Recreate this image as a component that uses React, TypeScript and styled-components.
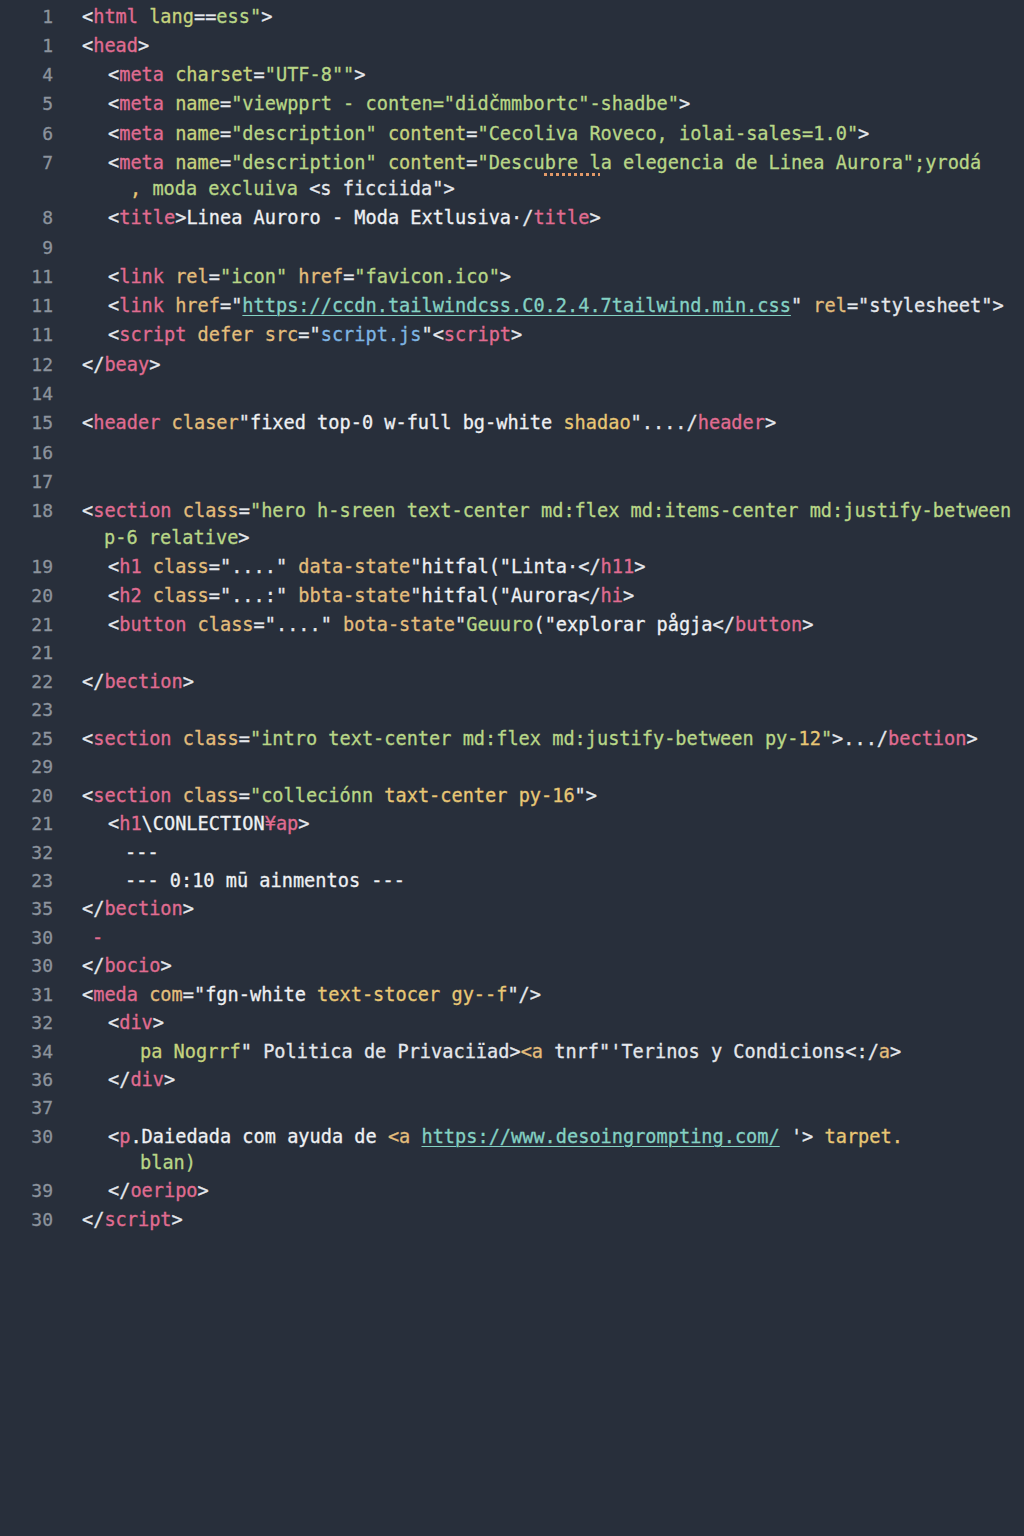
import React from "react";
import styled, { createGlobalStyle } from "styled-components";

const Global = createGlobalStyle`
  html, body {
    margin: 0;
    padding: 0;
    background: #282f3b;
  }
  body {
    font-family: "DejaVu Sans Mono", "Liberation Mono", monospace;
  }
`;

type Kind = "p" | "t" | "a" | "m" | "s" | "w" | "b" | "u" | "y" | "sq";

const colors: Record<Kind, string> = {
  p: "#e4e7ec",
  t: "#e06c91",
  a: "#e3bd7b",
  m: "#c6d37e",
  s: "#b8d687",
  w: "#eef0f3",
  b: "#7fb5e2",
  u: "#84d1c3",
  y: "#e8c775",
  sq: "#b8d687",
};

const Editor = styled.main`
  min-height: 1536px;
  box-sizing: border-box;
  background: #282f3b;
  padding: 1.5px 0 0;
  display: flex;
  flex-direction: column;
  font-size: 18.6px;
  -webkit-text-stroke: 0.3px currentColor;
`;

const Block = styled.div<{ $h: number }>`
  display: flex;
  flex-direction: column;
  --row-h: ${(p) => p.$h}px;
`;

const Row = styled.div<{ $wrap?: boolean }>`
  display: grid;
  grid-template-columns: 53px 1fr;
  column-gap: 29px;
  box-sizing: border-box;
  height: ${(p) => (p.$wrap ? "26px" : "var(--row-h)")};
  line-height: ${(p) => (p.$wrap ? "23px" : "var(--row-h)")};
  padding-bottom: ${(p) => (p.$wrap ? "3px" : "0")};
  white-space: pre;
`;

const LineNo = styled.span`
  text-align: right;
  color: #8c939d;
  font-size: 18px;
`;

const Code = styled.span<{ $indent: number }>`
  padding-left: ${(p) => p.$indent}px;
`;

const Tok = styled.span<{ $k: Kind }>`
  color: ${(p) => colors[p.$k]};
  ${(p) =>
    p.$k === "u"
      ? `text-decoration: underline; text-decoration-thickness: 1px; text-underline-offset: 3px;`
      : ""}
  ${(p) =>
    p.$k === "sq"
      ? `text-decoration: underline dotted #e39a68; text-decoration-thickness: 3px; text-underline-offset: 4px;`
      : ""}
`;

type T = [Kind, string];
type Line = { n?: string; i?: number; wrap?: boolean; toks?: T[] };

const top: Line[] = [
  { n: "1", i: 0, toks: [["p", "<"], ["t", "html"], ["m", " lang"], ["p", "=="], ["s", "ess\""], ["p", ">"]] },
  { n: "1", i: 0, toks: [["p", "<"], ["t", "head"], ["p", ">"]] },
  { n: "4", i: 26, toks: [["p", "<"], ["t", "meta"], ["m", " charset"], ["p", "="], ["s", "\"UTF-8\"\""], ["p", ">"]] },
  { n: "5", i: 26, toks: [["p", "<"], ["t", "meta"], ["m", " name"], ["p", "="], ["s", "\"viewpprt - conten=\"didčmmbortc\"-shadbe\""], ["p", ">"]] },
  { n: "6", i: 26, toks: [["p", "<"], ["t", "meta"], ["m", " name"], ["p", "="], ["s", "\"description\""], ["m", " content"], ["p", "="], ["s", "\"Cecoliva Roveco, iolai-sales=1.0\""], ["p", ">"]] },
  { n: "7", i: 26, toks: [["p", "<"], ["t", "meta"], ["m", " name"], ["p", "="], ["s", "\"description\""], ["m", " content"], ["p", "="], ["s", "\"Descu"], ["sq", "bre l"], ["s", "a elegencia de Linea Aurora\";yrodá"]] },
  { wrap: true, i: 48, toks: [["y", ","], ["s", " moda excluiva "], ["p", "<s ficciida\">"]] },
  { n: "8", i: 26, toks: [["p", "<"], ["t", "title"], ["p", ">"], ["w", "Linea Auroro - Moda Extlusiva"], ["p", "·/"], ["t", "title"], ["p", ">"]] },
  { n: "9" },
  { n: "11", i: 26, toks: [["p", "<"], ["t", "link"], ["a", " rel"], ["p", "="], ["s", "\"icon\""], ["a", " href"], ["p", "="], ["s", "\"favicon.ico\""], ["p", ">"]] },
  { n: "11", i: 26, toks: [["p", "<"], ["t", "link"], ["a", " href"], ["p", "=\""], ["u", "https://ccdn.tailwindcss.C0.2.4.7tailwind.min.css"], ["p", "\""], ["a", " rel"], ["p", "=\"stylesheet\">"]] },
  { n: "11", i: 26, toks: [["p", "<"], ["t", "script"], ["a", " defer src"], ["p", "=\""], ["b", "script.js"], ["p", "\"<"], ["t", "script"], ["p", ">"]] },
  { n: "12", i: 0, toks: [["p", "</"], ["t", "beay"], ["p", ">"]] },
  { n: "14" },
  { n: "15", i: 0, toks: [["p", "<"], ["t", "header"], ["a", " claser"], ["p", "\""], ["w", "fixed top-0 w-full bg-white "], ["y", "shadao"], ["p", "\"..../"], ["t", "header"], ["p", ">"]] },
  { n: "16" },
  { n: "17" },
  { n: "18", i: 0, toks: [["p", "<"], ["t", "section"], ["a", " class"], ["p", "="], ["s", "\"hero h-sreen text-center md:flex md:items-center md:justify-between"]] },
  { wrap: true, i: 22, toks: [["s", "p-6 relative"], ["p", ">"]] },
  { n: "19", i: 26, toks: [["p", "<"], ["t", "h1"], ["a", " class"], ["p", "=\"....\""], ["a", " data-state"], ["p", "\""], ["w", "hitfal(\"Linta"], ["p", "·</"], ["t", "h11"], ["p", ">"]] },
  { n: "20", i: 26, toks: [["p", "<"], ["t", "h2"], ["a", " class"], ["p", "=\"...:\""], ["a", " bbta-state"], ["p", "\""], ["w", "hitfal(\"Aurora"], ["p", "</"], ["t", "hi"], ["p", ">"]] },
  { n: "21", i: 26, toks: [["p", "<"], ["t", "button"], ["a", " class"], ["p", "=\"....\""], ["a", " bota-state"], ["p", "\""], ["s", "Geuuro"], ["w", "(\"explorar pågja"], ["p", "</"], ["t", "button"], ["p", ">"]] },
];

const bottom: Line[] = [
  { n: "21" },
  { n: "22", i: 0, toks: [["p", "</"], ["t", "bection"], ["p", ">"]] },
  { n: "23" },
  { n: "25", i: 0, toks: [["p", "<"], ["t", "section"], ["a", " class"], ["p", "="], ["s", "\"intro text-center md:flex md:justify-between py-"], ["y", "12"], ["s", "\""], ["p", ">.../"], ["t", "bection"], ["p", ">"]] },
  { n: "29" },
  { n: "20", i: 0, toks: [["p", "<"], ["t", "section"], ["a", " class"], ["p", "="], ["s", "\"colleciónn "], ["y", "taxt-center py-16"], ["p", "\">"]] },
  { n: "21", i: 26, toks: [["p", "<"], ["t", "h1"], ["w", "\\CONLECTION"], ["t", "¥ap"], ["p", ">"]] },
  { n: "32", i: 43, toks: [["w", "---"]] },
  { n: "23", i: 43, toks: [["w", "--- 0:10 mū ainmentos ---"]] },
  { n: "35", i: 0, toks: [["p", "</"], ["t", "bection"], ["p", ">"]] },
  { n: "30", i: 10, toks: [["t", "-"]] },
  { n: "30", i: 0, toks: [["p", "</"], ["t", "bocio"], ["p", ">"]] },
  { n: "31", i: 0, toks: [["p", "<"], ["t", "meda"], ["a", " com"], ["p", "=\""], ["w", "fgn-white "], ["y", "text-stocer gy--f"], ["p", "\"/>"]] },
  { n: "32", i: 26, toks: [["p", "<"], ["t", "div"], ["p", ">"]] },
  { n: "34", i: 58, toks: [["m", "pa Nogrrf"], ["p", "\" Politica de Privaciïad>"], ["a", "<a"], ["p", " tnrf\"'Terinos y Condicions<:/"], ["a", "a"], ["p", ">"]] },
  { n: "36", i: 26, toks: [["p", "</"], ["t", "div"], ["p", ">"]] },
  { n: "37" },
  { n: "30", i: 26, toks: [["p", "<"], ["t", "p"], ["w", ".Daiedada com ayuda de "], ["a", "<a"], ["p", " "], ["u", "https://www.desoingrompting.com/"], ["p", " '> "], ["y", "tarpet."]] },
  { wrap: true, i: 58, toks: [["s", "blan)"]] },
  { n: "39", i: 26, toks: [["p", "</"], ["t", "oeripo"], ["p", ">"]] },
  { n: "30", i: 0, toks: [["p", "</"], ["t", "script"], ["p", ">"]] },
];

function Lines({ items }: { items: Line[] }) {
  return (
    <>
      {items.map((l, idx) => (
        <Row key={idx} $wrap={l.wrap}>
          <LineNo>{l.n ?? ""}</LineNo>
          <Code $indent={l.i ?? 0}>
            {(l.toks ?? []).map(([k, text], j) => (
              <Tok key={j} $k={k}>
                {text}
              </Tok>
            ))}
          </Code>
        </Row>
      ))}
    </>
  );
}

export default function App() {
  return (
    <>
      <Global />
      <Editor>
        <Block $h={29.3}>
          <Lines items={top} />
        </Block>
        <Block $h={28.44}>
          <Lines items={bottom} />
        </Block>
      </Editor>
    </>
  );
}
